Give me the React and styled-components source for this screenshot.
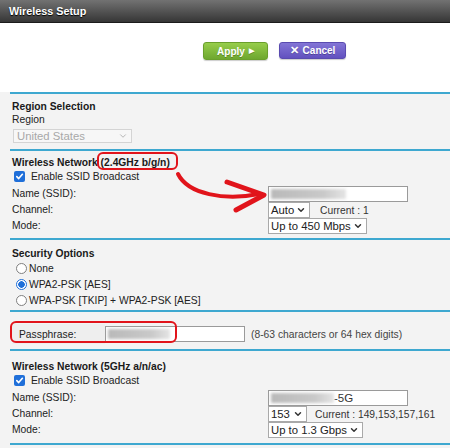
import React from 'react'
import styled, { createGlobalStyle } from 'styled-components'
import { ChevronDown } from 'lucide-react'

const GlobalStyle = createGlobalStyle`
  html, body { margin: 0; padding: 0; background: #f3f3f3; }
  body { font-family: "Liberation Sans", Arial, sans-serif; color: #222; }
  * { box-sizing: border-box; }
`

const App = () => {
  return (
    <Page>
      <GlobalStyle />
      <Header>Wireless Setup</Header>
      <Toolbar>
        <ApplyButton>Apply <span>▶</span></ApplyButton>
        <CancelButton><b>✕</b> Cancel</CancelButton>
      </Toolbar>

      <Section top={6} bottom={6}>
        <Title>Region Selection</Title>
        <Line>Region</Line>
        <Select width={119} disabled>
          United States
          <ChevronDown size={10} strokeWidth={2} color="#aaa" />
        </Select>
      </Section>

      <Section top={5} bottom={4}>
        <Title>Wireless Network (2.4GHz b/g/n)</Title>
        <CheckRow>
          <CheckBox />
          Enable SSID Broadcast
        </CheckRow>
        <Grid>
          <Label>Name (SSID):</Label>
          <TextInput width={140}><Blur width={75} /></TextInput>
          <Label>Channel:</Label>
          <Cell>
            <Select width={42}>Auto<Chevron /></Select>
            <Current>Current : 1</Current>
          </Cell>
          <Label>Mode:</Label>
          <Cell><Select width={99}>Up to 450 Mbps<Chevron /></Select></Cell>
        </Grid>
      </Section>

      <Section top={7} bottom={2}>
        <Title>Security Options</Title>
        <RadioRow><Radio /> None</RadioRow>
        <RadioRow><Radio checked /> WPA2-PSK [AES]</RadioRow>
        <RadioRow><Radio /> WPA-PSK [TKIP] + WPA2-PSK [AES]</RadioRow>
      </Section>

      <Section top={11} bottom={4}>
        <PassRow>
          <PassLabel>Passphrase:</PassLabel>
          <TextInput width={140}><Blur width={62} /></TextInput>
          <Hint>(8-63 characters or 64 hex digits)</Hint>
        </PassRow>
      </Section>

      <Section top={9} bottom={5}>
        <Title>Wireless Network (5GHz a/n/ac)</Title>
        <CheckRow>
          <CheckBox />
          Enable SSID Broadcast
        </CheckRow>
        <Grid>
          <Label>Name (SSID):</Label>
          <TextInput width={140}><Blur width={63} />-5G</TextInput>
          <Label>Channel:</Label>
          <Cell>
            <Select width={39}>153<Chevron /></Select>
            <Current gap={8}>Current : 149,153,157,161</Current>
          </Cell>
          <Label>Mode:</Label>
          <Cell><Select width={95}>Up to 1.3 Gbps<Chevron /></Select></Cell>
        </Grid>
      </Section>
      <Section top={0} bottom={10} />

      <Mark x={97} y={152} w={81} h={18} />
      <Mark x={10} y={321} w={167} h={22} />
      <Arrow viewBox="0 0 450 448" width="450" height="448">
        <path d="M178 174 C 188 194, 224 201, 259 194" fill="none" stroke="#e1141b" strokeWidth="4" strokeLinecap="round" />
        <path d="M227 182 L264 195 L236 210" fill="none" stroke="#e1141b" strokeWidth="5" strokeLinecap="round" strokeLinejoin="round" />
      </Arrow>
    </Page>
  )
}

export default App

const Chevron = () => <ChevronDown size={10} strokeWidth={3.5} color="#333" />

const CheckBox = () => (
  <CheckBoxBox>
    <svg width="9" height="9" viewBox="0 0 10 10">
      <path d="M2 5.2 L4.1 7.3 L8.2 2.6" fill="none" stroke="#fff" strokeWidth="1.8" strokeLinecap="round" strokeLinejoin="round" />
    </svg>
  </CheckBoxBox>
)

const Page = styled.div`
position: relative;
width: 450px;
height: 448px;
overflow: hidden;
background: #f3f3f3;
font-size: 10.3px;
`

const Header = styled.div`
height: 23px;
display: flex;
align-items: center;
padding-left: 9px;
background: linear-gradient(#727272, #363636);
border-bottom: 1px solid #1c1c1c;
color: #fff;
font-weight: bold;
font-size: 10.8px;
text-shadow: 0 1px 1px #000;
`

const Toolbar = styled.div`
height: 69px;
background: #fff;
display: flex;
align-items: flex-start;
gap: 11px;
padding: 19px 0 0 203px;
`

const Button = styled.div`
height: 18px;
display: flex;
align-items: center;
justify-content: center;
gap: 4px;
border-radius: 3px;
color: #fff;
font-weight: bold;
font-size: 10px;
text-shadow: 0 1px 0 rgba(0,0,0,0.25);
box-shadow: 0 1px 1px rgba(0,0,0,0.2);
`

const ApplyButton = styled(Button)`
width: 65px;
background: linear-gradient(#96cd4a, #6ea72f);
border: 1px solid #6a9f2c;
span { font-size: 7px; }
`

const CancelButton = styled(Button)`
width: 67px;
height: 17px;
background: linear-gradient(#8375d6, #6251bf);
border: 1px solid #5a4bb0;
b { font-size: 11px; }
`

const Section = styled.div`
margin-left: 10px;
border-top: 2px solid #3ea8d0;
padding: ${p => p.top}px 0 ${p => p.bottom}px 2px;
background: #f3f3f3;
`

const Title = styled.div`
height: 12px;
line-height: 12px;
font-weight: bold;
font-size: 10.3px;
color: #1a1a1a;
&:first-child { height: 13px; line-height: 13px; }
`

const Line = styled.div`
height: 13px;
line-height: 13px;
margin-bottom: 3px;
`

const Select = styled.div`
width: ${p => p.width}px;
height: ${p => (p.disabled ? 14 : 16)}px;
display: inline-flex;
align-items: center;
justify-content: space-between;
padding: 0 3px 0 ${p => (p.disabled ? 3 : 2)}px;
border: 1px solid ${p => (p.disabled ? '#d4d4d4' : '#a9a9a9')};
background: ${p => (p.disabled ? '#f7f7f7' : '#fff')};
color: ${p => (p.disabled ? '#a8a8a8' : '#222')};
font-size: 11.3px;
margin-left: ${p => (p.disabled ? '1px' : '0')};
white-space: nowrap;
`

const CheckRow = styled.div`
height: 15px;
display: flex;
align-items: center;
gap: 6px;
padding-left: 2px;
margin-bottom: 2px;
`

const CheckBoxBox = styled.span`
width: 11px;
height: 11px;
border-radius: 2px;
background: #1f6fd9;
display: flex;
align-items: center;
justify-content: center;
`

const Grid = styled.div`
display: grid;
grid-template-columns: 256px 1fr;
grid-auto-rows: 16px;
align-items: center;
`

const Label = styled.div`
line-height: 16px;
`

const Cell = styled.div`
display: flex;
align-items: center;
height: 16px;
`

const Current = styled.span`
margin-left: ${p => p.gap || 10}px;
color: #333;
`

const TextInput = styled.div`
width: ${p => p.width}px;
height: 16px;
display: flex;
align-items: center;
padding-left: 2px;
border: 1px solid #9a9a9a;
background: #fff;
font-size: 11.5px;
color: #333;
`

const Blur = styled.span`
width: ${p => p.width}px;
height: 10px;
background: linear-gradient(90deg, #b9b9b9, #c9c9c9 70%, #e4e4e4);
filter: blur(1.5px);
`

const RadioRow = styled.div`
height: 16px;
display: flex;
align-items: center;
gap: 2px;
padding-left: 4px;
`

const Radio = styled.span`
width: 11px;
height: 11px;
border-radius: 50%;
border: 1px solid ${p => (p.checked ? '#1f6fd9' : '#808080')};
background: ${p => (p.checked ? 'radial-gradient(circle, #1f6fd9 0 3px, #fff 3.5px)' : '#fff')};
`

const PassRow = styled.div`
height: 22px;
display: flex;
align-items: center;
`

const PassLabel = styled.div`
width: 93px;
height: 20px;
display: flex;
align-items: center;
padding-left: 7px;
background: #eeeeee;
color: #222;
`

const Hint = styled.span`
margin-left: 6px;
color: #444;
font-size: 10.3px;
`

const Mark = styled.div`
position: absolute;
left: ${p => p.x}px;
top: ${p => p.y}px;
width: ${p => p.w}px;
height: ${p => p.h}px;
border: 2.5px solid #e1141b;
border-radius: 6px;
pointer-events: none;
`

const Arrow = styled.svg`
position: absolute;
left: 0;
top: 0;
pointer-events: none;
`
